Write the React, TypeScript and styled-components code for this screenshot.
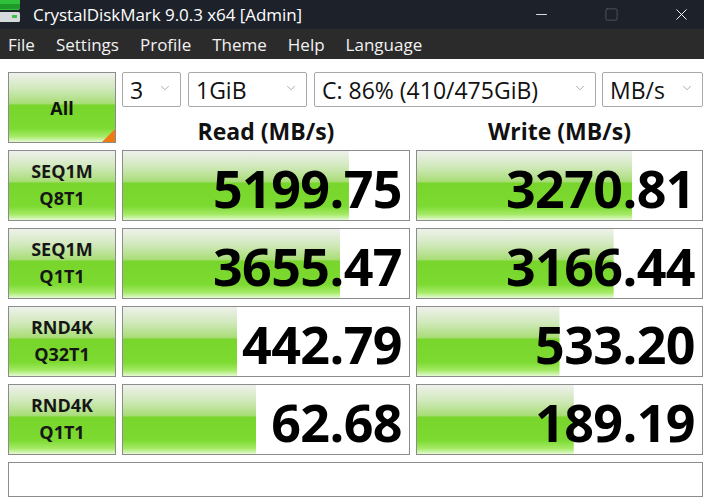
import React from "react";
import styled, { createGlobalStyle } from "styled-components";
import { ChevronDown, Minus, Square, X } from "lucide-react";

const GREEN =
  "linear-gradient(180deg, #eef1ec 0%, #d2e9bd 22%, #a9dd78 44%, #77d52b 47%, #7cda31 80%, #a5ea66 92%, #e4fad3 100%)";

const results = [
  { top: "SEQ1M", bottom: "Q8T1", read: "5199.75", readPct: 79, write: "3270.81", writePct: 75.5 },
  { top: "SEQ1M", bottom: "Q1T1", read: "3655.47", readPct: 76, write: "3166.44", writePct: 69 },
  { top: "RND4K", bottom: "Q32T1", read: "442.79", readPct: 40, write: "533.20", writePct: 50 },
  { top: "RND4K", bottom: "Q1T1", read: "62.68", readPct: 46.5, write: "189.19", writePct: 55 },
];

const menus = ["File", "Settings", "Profile", "Theme", "Help", "Language"];

export default function App() {
  return (
    <Window>
      <GlobalStyle />
      <TitleBar>
        <AppIcon width="22" height="24" viewBox="0 0 22 24">
          <rect x="-4" y="-2" width="24" height="12" rx="2" fill="#2fbf3a" />
          <rect x="-4" y="4" width="24" height="5" fill="#1f9a2a" />
          <rect x="-4" y="12" width="24" height="10" rx="1.5" fill="#d7dadc" />
          <rect x="12" y="15" width="5" height="3" fill="#3ec24a" />
        </AppIcon>
        <Title>CrystalDiskMark 9.0.3 x64 [Admin]</Title>
        <Controls>
          <CtrlButton>
            <Minus size={17} strokeWidth={1.2} />
          </CtrlButton>
          <CtrlButton $dim>
            <Square size={15} strokeWidth={1.2} />
          </CtrlButton>
          <CtrlButton>
            <X size={19} strokeWidth={1.2} />
          </CtrlButton>
        </Controls>
      </TitleBar>
      <MenuBar>
        {menus.map((m) => (
          <MenuItem key={m}>{m}</MenuItem>
        ))}
      </MenuBar>
      <Board>
        <AllButton>
          All
          <Corner />
        </AllButton>
        <TopArea>
          <SelectRow>
            <Select $w={59}>
              3
              <ChevronDown size={14} strokeWidth={1.2} />
            </Select>
            <Select $w={119}>
              1GiB
              <ChevronDown size={14} strokeWidth={1.2} />
            </Select>
            <Select $w={282}>
              C: 86% (410/475GiB)
              <ChevronDown size={14} strokeWidth={1.2} />
            </Select>
            <Select $w={101} $gap={6}>
              MB/s
              <ChevronDown size={14} strokeWidth={1.2} />
            </Select>
          </SelectRow>
          <Headers>
            <Header>Read (MB/s)</Header>
            <Header>Write (MB/s)</Header>
          </Headers>
        </TopArea>
        {results.map((r, i) => (
          <React.Fragment key={i}>
            <TestLabel>
              <span>{r.top}</span>
              <span>{r.bottom}</span>
            </TestLabel>
            <ValueCell $fill={r.readPct}>{r.read}</ValueCell>
            <ValueCell $fill={r.writePct}>{r.write}</ValueCell>
          </React.Fragment>
        ))}
        <StatusBar />
      </Board>
    </Window>
  );
}

const GlobalStyle = createGlobalStyle`
  body {
    margin: 0;
    background: #ffffff;
    font-family: "Open Sans", "Noto Sans", sans-serif;
  }
`;

const Window = styled.div`
  width: 704px;
  height: 499px;
  overflow: hidden;
  background: #ffffff;
`;

const TitleBar = styled.div`
  height: 29px;
  display: flex;
  align-items: center;
  background: #1d222a;
  color: #ffffff;
`;

const AppIcon = styled.svg`
  flex: none;
  align-self: flex-start;
`;

const Title = styled.div`
  margin-left: 11px;
  font-size: 17px;
  letter-spacing: -0.05px;
`;

const Controls = styled.div`
  margin-left: auto;
  margin-right: -12px;
  display: flex;
  align-items: center;
  height: 100%;
  flex: none;
`;

const CtrlButton = styled.div<{ $dim?: boolean }>`
  width: 70px;
  height: 100%;
  display: flex;
  align-items: center;
  justify-content: center;
  color: ${(p) => (p.$dim ? "#5b6068" : "#ffffff")};
`;

const MenuBar = styled.div`
  height: 30px;
  display: flex;
  align-items: center;
  gap: 21px;
  padding-left: 8px;
  background: #2b2b2b;
  color: #f2f2f2;
  font-size: 17px;
`;

const MenuItem = styled.span`
  line-height: 1;
`;

const Board = styled.div`
  display: grid;
  grid-template-columns: 108px 288px 287px;
  grid-auto-rows: 71px;
  column-gap: 6px;
  row-gap: 7px;
  padding: 13px 0 0 8px;
`;

const AllButton = styled.div`
  position: relative;
  box-sizing: border-box;
  border: 1px solid #8c8c8c;
  background: ${GREEN};
  display: flex;
  align-items: center;
  justify-content: center;
  font-weight: 700;
  font-size: 18px;
  color: #111111;
`;

const Corner = styled.div`
  position: absolute;
  right: 0;
  bottom: 0;
  width: 0;
  height: 0;
  border-left: 13px solid transparent;
  border-bottom: 13px solid #f07a12;
`;

const TopArea = styled.div`
  grid-column: 2 / span 2;
  display: flex;
  flex-direction: column;
`;

const SelectRow = styled.div`
  display: flex;
  height: 35px;
`;

const Select = styled.div<{ $w: number; $gap?: number }>`
  box-sizing: border-box;
  width: ${(p) => p.$w}px;
  margin-left: ${(p) => p.$gap ?? 7}px;
  &:first-child {
    margin-left: 0;
  }
  border: 1px solid #a9a9a9;
  border-radius: 2px;
  display: flex;
  align-items: center;
  justify-content: space-between;
  padding: 0 8px 0 7px;
  font-size: 23px;
  color: #111111;
  svg {
    flex: none;
    color: #8a8a8a;
    margin-top: -3px;
  }
`;

const Headers = styled.div`
  flex: 1;
  display: grid;
  grid-template-columns: 288px 287px;
  column-gap: 6px;
  align-items: end;
`;

const Header = styled.div`
  text-align: center;
  font-weight: 700;
  font-size: 23px;
  line-height: 1;
  padding-bottom: 0;
  color: #111111;
`;

const TestLabel = styled.div`
  box-sizing: border-box;
  border: 1px solid #8c8c8c;
  background: ${GREEN};
  display: flex;
  flex-direction: column;
  align-items: center;
  justify-content: center;
  gap: 5px;
  font-weight: 700;
  font-size: 18px;
  line-height: 1.2;
  color: #161616;
`;

const ValueCell = styled.div<{ $fill: number }>`
  box-sizing: border-box;
  border: 1px solid #8c8c8c;
  background-color: #ffffff;
  background-image: ${GREEN};
  background-repeat: no-repeat;
  background-size: ${(p) => p.$fill}% 100%;
  display: flex;
  align-items: center;
  justify-content: flex-end;
  padding: 5px 7px 0 0;
  font-weight: 700;
  font-size: 52px;
  line-height: 1;
  letter-spacing: -0.6px;
  color: #000000;
`;

const StatusBar = styled.div`
  grid-column: 1 / -1;
  height: 35px;
  box-sizing: border-box;
  border: 1px solid #8c8c8c;
`;
